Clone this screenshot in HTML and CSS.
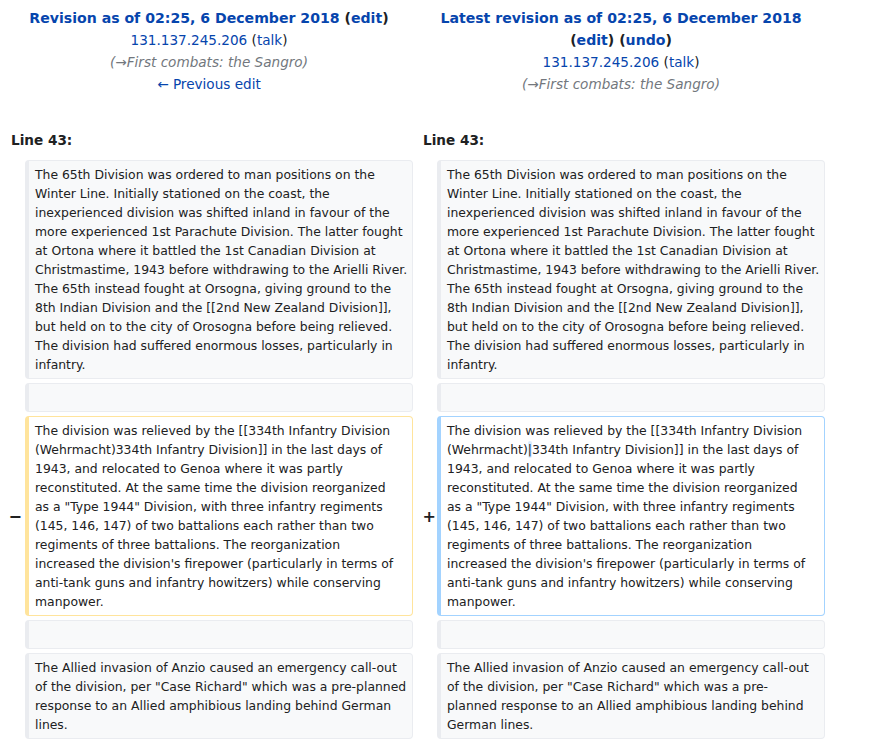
FILE: index.html
```html
<!DOCTYPE html>
<html>
<head>
<meta charset="utf-8">
<title>Difference between revisions</title>
<link rel="stylesheet" href="styles.css">
</head>
<body>
<table class="diff">
  <colgroup>
    <col class="col-marker"><col class="col-content"><col class="col-marker"><col class="col-content">
  </colgroup>
  <tr>
    <td colspan="2" class="title">
      <div class="title-line"><strong><a href="#">Revision as of 02:25, 6 December 2018</a> <span class="plain">(<a href="#">edit</a>)</span></strong></div>
      <div class="title-line"><a href="#">131.137.245.206</a> <span class="plain">(<a href="#">talk</a>)</span></div>
      <div class="title-line comment">(→First combats: the Sangro)</div>
      <div class="title-line"><a href="#">← Previous edit</a></div>
    </td>
    <td colspan="2" class="title">
      <div class="title-line"><strong><a href="#">Latest revision as of 02:25, 6 December 2018</a><br><span class="plain">(<a href="#">edit</a>) (<a href="#">undo</a>)</span></strong></div>
      <div class="title-line"><a href="#">131.137.245.206</a> <span class="plain">(<a href="#">talk</a>)</span></div>
      <div class="title-line comment">(→First combats: the Sangro)</div>
    </td>
  </tr>
  <tr>
    <td colspan="2" class="lineno">Line 43:</td>
    <td colspan="2" class="lineno">Line 43:</td>
  </tr>
  <tr>
    <td class="marker"></td>
    <td class="line ctx">The 65th Division was ordered to man positions on the<br>Winter Line. Initially stationed on the coast, the<br>inexperienced division was shifted inland in favour of the<br>more experienced 1st Parachute Division. The latter fought<br>at Ortona where it battled the 1st Canadian Division at<br>Christmastime, 1943 before withdrawing to the Arielli River.<br>The 65th instead fought at Orsogna, giving ground to the<br>8th Indian Division and the [[2nd New Zealand Division]],<br>but held on to the city of Orosogna before being relieved.<br>The division had suffered enormous losses, particularly in<br>infantry.</td>
    <td class="marker"></td>
    <td class="line ctx">The 65th Division was ordered to man positions on the<br>Winter Line. Initially stationed on the coast, the<br>inexperienced division was shifted inland in favour of the<br>more experienced 1st Parachute Division. The latter fought<br>at Ortona where it battled the 1st Canadian Division at<br>Christmastime, 1943 before withdrawing to the Arielli River.<br>The 65th instead fought at Orsogna, giving ground to the<br>8th Indian Division and the [[2nd New Zealand Division]],<br>but held on to the city of Orosogna before being relieved.<br>The division had suffered enormous losses, particularly in<br>infantry.</td>
  </tr>
  <tr>
    <td class="marker"></td>
    <td class="line ctx"><br></td>
    <td class="marker"></td>
    <td class="line ctx"><br></td>
  </tr>
  <tr>
    <td class="marker"><span class="sign sign-del">−</span></td>
    <td class="line deleted">The division was relieved by the [[334th Infantry Division<br>(Wehrmacht)334th Infantry Division]] in the last days of<br>1943, and relocated to Genoa where it was partly<br>reconstituted. At the same time the division reorganized<br>as a "Type 1944" Division, with three infantry regiments<br>(145, 146, 147) of two battalions each rather than two<br>regiments of three battalions. The reorganization<br>increased the division's firepower (particularly in terms of<br>anti-tank guns and infantry howitzers) while conserving<br>manpower.</td>
    <td class="marker"><span class="sign sign-add">+</span></td>
    <td class="line added">The division was relieved by the [[334th Infantry Division<br>(Wehrmacht)<ins class="change">|</ins>334th Infantry Division]] in the last days of<br>1943, and relocated to Genoa where it was partly<br>reconstituted. At the same time the division reorganized<br>as a "Type 1944" Division, with three infantry regiments<br>(145, 146, 147) of two battalions each rather than two<br>regiments of three battalions. The reorganization<br>increased the division's firepower (particularly in terms of<br>anti-tank guns and infantry howitzers) while conserving<br>manpower.</td>
  </tr>
  <tr>
    <td class="marker"></td>
    <td class="line ctx"><br></td>
    <td class="marker"></td>
    <td class="line ctx"><br></td>
  </tr>
  <tr>
    <td class="marker"></td>
    <td class="line ctx">The Allied invasion of Anzio caused an emergency call-out<br>of the division, per "Case Richard" which was a pre-planned<br>response to an Allied amphibious landing behind German<br>lines.</td>
    <td class="marker"></td>
    <td class="line ctx">The Allied invasion of Anzio caused an emergency call-out<br>of the division, per "Case Richard" which was a pre-<br>planned response to an Allied amphibious landing behind<br>German lines.</td>
  </tr>
</table>
</body>
</html>
```

FILE: styles.css
```css
html, body {
  margin: 0;
  padding: 0;
  background: #ffffff;
}

body {
  font-family: "DejaVu Sans", "Liberation Sans", sans-serif;
  color: #202122;
  font-size: 13.6px;
}

a {
  color: #0645ad;
  text-decoration: none;
}

.diff {
  margin-left: 1px;
  width: 828px;
  table-layout: fixed;
  border-collapse: separate;
  border-spacing: 4px;
}

.col-marker {
  width: 16px;
}

.col-content {
  width: 388px;
}

.title {
  text-align: center;
  vertical-align: top;
  padding: 3px 6px 25px;
  line-height: 22px;
}

.title strong {
  font-weight: bold;
  font-size: 14.1px;
}

.plain {
  color: #202122;
}

.comment {
  font-style: italic;
  color: #72777d;
}

.lineno {
  font-weight: bold;
  padding: 5px 6px;
  line-height: 22px;
}

.marker {
  text-align: right;
  vertical-align: middle;
  padding: 0;
  font-weight: bold;
  font-size: 16px;
  line-height: 19px;
  white-space: nowrap;
}

.sign {
  display: inline-block;
}

.sign-del {
  margin-right: -1px;
}

.sign-add {
  margin-right: -3px;
}

.line {
  vertical-align: top;
  font-size: 12.4px;
  line-height: 19px;
  padding: 4px 6px;
  border: 1px solid #eaecf0;
  border-left-width: 4px;
  border-radius: 4px;
  white-space: nowrap;
  overflow: hidden;
}

.ctx {
  background: #f8f9fa;
}

.deleted {
  background: #ffffff;
  border-color: #ffe49c;
}

.added {
  background: #ffffff;
  border-color: #a3d3ff;
}

.change {
  text-decoration: none;
  background: #d8ecff;
  border-radius: 2px;
  padding: 1px 0;
}
```
